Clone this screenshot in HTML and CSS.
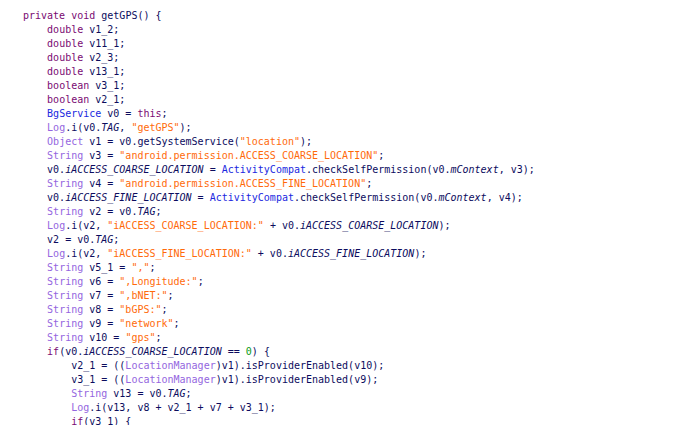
FILE: index.html
```html
<!DOCTYPE html>
<html>
<head>
<meta charset="utf-8">
<link rel="stylesheet" href="styles.css">
</head>
<body>
<pre class="code"><span class="k">private</span> <span class="k">void</span> getGPS() {
    <span class="k">double</span> v1_2;
    <span class="k">double</span> v11_1;
    <span class="k">double</span> v2_3;
    <span class="k">double</span> v13_1;
    <span class="k">boolean</span> v3_1;
    <span class="k">boolean</span> v2_1;
    <span class="t">BgService</span> v0 = <span class="k">this</span>;
    <span class="c">Log</span>.i(v0.<span class="f">TAG</span>, <span class="s">"getGPS"</span>);
    <span class="c">Object</span> v1 = v0.getSystemService(<span class="s">"location"</span>);
    <span class="c">String</span> v3 = <span class="s">"android.permission.ACCESS_COARSE_LOCATION"</span>;
    v0.<span class="f">iACCESS_COARSE_LOCATION</span> = <span class="t">ActivityCompat</span>.checkSelfPermission(v0.<span class="f">mContext</span>, v3);
    <span class="c">String</span> v4 = <span class="s">"android.permission.ACCESS_FINE_LOCATION"</span>;
    v0.<span class="f">iACCESS_FINE_LOCATION</span> = <span class="t">ActivityCompat</span>.checkSelfPermission(v0.<span class="f">mContext</span>, v4);
    <span class="c">String</span> v2 = v0.<span class="f">TAG</span>;
    <span class="c">Log</span>.i(v2, <span class="s">"iACCESS_COARSE_LOCATION:"</span> + v0.<span class="f">iACCESS_COARSE_LOCATION</span>);
    v2 = v0.<span class="f">TAG</span>;
    <span class="c">Log</span>.i(v2, <span class="s">"iACCESS_FINE_LOCATION:"</span> + v0.<span class="f">iACCESS_FINE_LOCATION</span>);
    <span class="c">String</span> v5_1 = <span class="s">","</span>;
    <span class="c">String</span> v6 = <span class="s">",Longitude:"</span>;
    <span class="c">String</span> v7 = <span class="s">",bNET:"</span>;
    <span class="c">String</span> v8 = <span class="s">"bGPS:"</span>;
    <span class="c">String</span> v9 = <span class="s">"network"</span>;
    <span class="c">String</span> v10 = <span class="s">"gps"</span>;
    <span class="k">if</span>(v0.<span class="f">iACCESS_COARSE_LOCATION</span> == <span class="n">0</span>) {
        v2_1 = ((<span class="c">LocationManager</span>)v1).isProviderEnabled(v10);
        v3_1 = ((<span class="c">LocationManager</span>)v1).isProviderEnabled(v9);
        <span class="c">String</span> v13 = v0.<span class="f">TAG</span>;
        <span class="c">Log</span>.i(v13, v8 + v2_1 + v7 + v3_1);
        <span class="k">if</span>(v3_1) {
</pre>
</body>
</html>
```
FILE: styles.css
```css
html, body {
  margin: 0;
  padding: 0;
  background: #ffffff;
  overflow: hidden;
}
.code {
  margin: 0;
  padding: 9px 0 0 23px;
  font-family: "DejaVu Sans Mono", "Liberation Mono", monospace;
  font-size: 10px;
  line-height: 14px;
  color: #0c0c5e;
  white-space: pre;
}
.k { color: #7a0a72; }
.t { color: #1a28e0; }
.c { color: #9466e0; }
.s { color: #ff6a0a; }
.f { font-style: italic; color: #0c0c5e; }
.n { color: #089a18; }
```
